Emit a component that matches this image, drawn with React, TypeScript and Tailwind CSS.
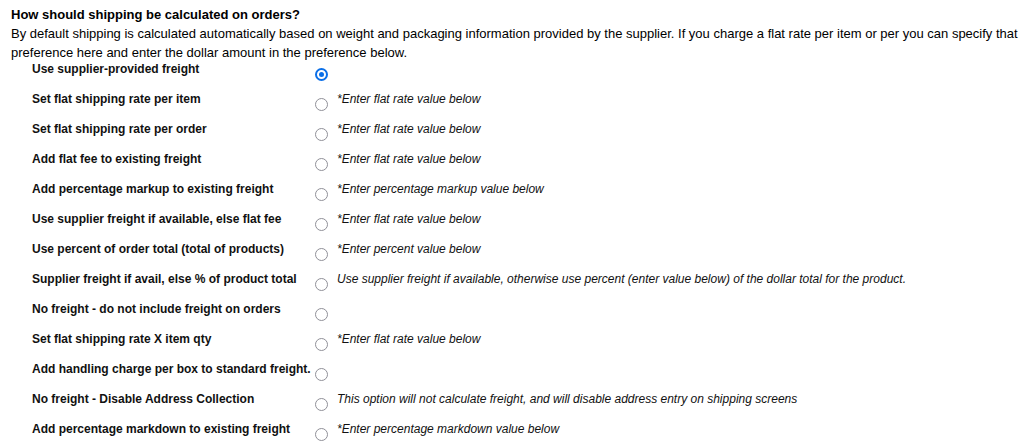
const options = [
  { label: 'Use supplier-provided freight', note: '', checked: true },
  { label: 'Set flat shipping rate per item', note: '*Enter flat rate value below' },
  { label: 'Set flat shipping rate per order', note: '*Enter flat rate value below' },
  { label: 'Add flat fee to existing freight', note: '*Enter flat rate value below' },
  { label: 'Add percentage markup to existing freight', note: '*Enter percentage markup value below' },
  { label: 'Use supplier freight if available, else flat fee', note: '*Enter flat rate value below' },
  { label: 'Use percent of order total (total of products)', note: '*Enter percent value below' },
  {
    label: 'Supplier freight if avail, else % of product total',
    note: 'Use supplier freight if available, otherwise use percent (enter value below) of the dollar total for the product.',
  },
  { label: 'No freight - do not include freight on orders', note: '' },
  { label: 'Set flat shipping rate X item qty', note: '*Enter flat rate value below' },
  { label: 'Add handling charge per box to standard freight.', note: '' },
  {
    label: 'No freight - Disable Address Collection',
    note: 'This option will not calculate freight, and will disable address entry on shipping screens',
  },
  { label: 'Add percentage markdown to existing freight', note: '*Enter percentage markdown value below' },
];

function Radio({ checked }: { checked?: boolean }) {
  if (checked) {
    return (
      <span className="flex h-[13px] w-[13px] items-center justify-center rounded-full border-[2px] border-[#0b6fe8] bg-white">
        <span className="h-[5px] w-[5px] rounded-full bg-[#0b6fe8]" />
      </span>
    );
  }
  return <span className="block h-[13px] w-[13px] rounded-full border-[1.75px] border-[#909098] bg-white" />;
}

export default function App() {
  return (
    <div className="min-h-[448px] bg-white px-[11px] pt-[5px] text-black" style={{ fontFamily: '"Liberation Sans", Arial, sans-serif' }}>
      <h2 className="text-[13px] font-bold leading-[19px]">How should shipping be calculated on orders?</h2>
      <p className="text-[13px] leading-[19px]">
        By default shipping is calculated automatically based on weight and packaging information provided by the
        supplier. If you charge a flat rate per item or per you can specify that preference here and enter the dollar
        amount in the preference below.
      </p>

      {/* Options */}
      <div className="pl-[21px]">
        {options.map((opt) => (
          <div key={opt.label} className="flex h-[30px] items-start">
            <div className="w-[283px] shrink-0 text-[12px] font-bold leading-[14px] text-[#111]">{opt.label}</div>
            <div className="mt-[6px] shrink-0">
              <Radio checked={opt.checked} />
            </div>
            <div className="ml-[9px] text-[12px] italic leading-[14px] text-[#111]">{opt.note}</div>
          </div>
        ))}
      </div>
    </div>
  );
}
